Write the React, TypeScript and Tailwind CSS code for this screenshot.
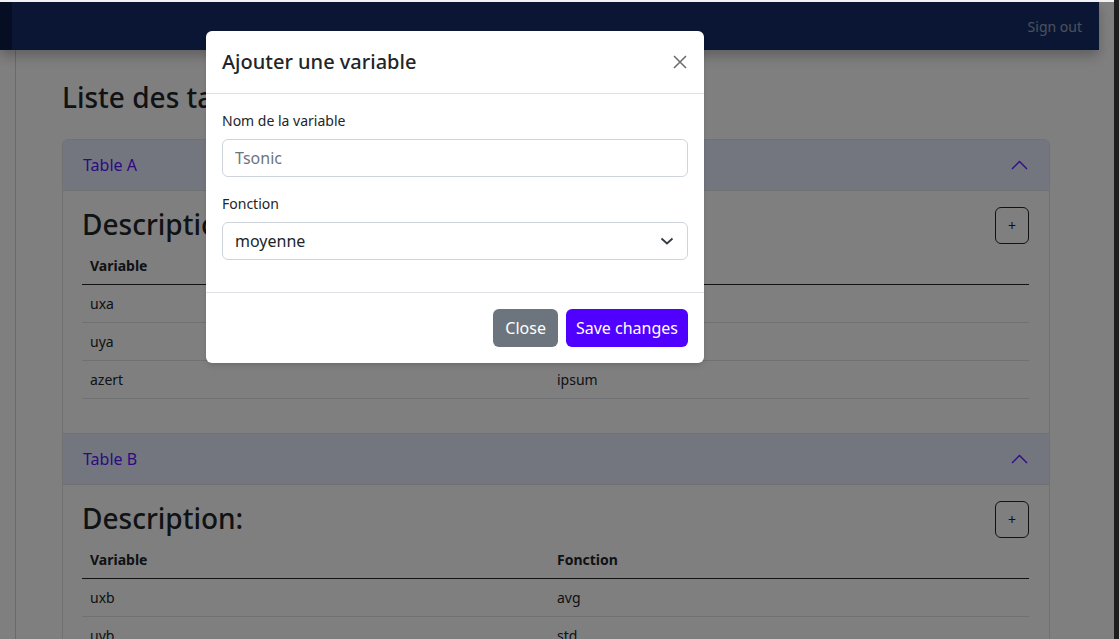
import React from "react";

type Row = { variable: string; fonction: string };

const tables: { name: string; rows: Row[] }[] = [
  {
    name: "Table A",
    rows: [
      { variable: "uxa", fonction: "avg" },
      { variable: "uya", fonction: "std" },
      { variable: "azert", fonction: "ipsum" },
    ],
  },
  {
    name: "Table B",
    rows: [
      { variable: "uxb", fonction: "avg" },
      { variable: "uyb", fonction: "std" },
      { variable: "uzb", fonction: "max" },
    ],
  },
];

function ChevronUp() {
  return (
    <svg width="17" height="10" viewBox="0 0 17 10" fill="none">
      <path d="M1 9 L8.5 1.5 L16 9" stroke="#5a1aff" strokeWidth="1.4" />
    </svg>
  );
}

function AccordionItem({ name, rows, first }: { name: string; rows: Row[]; first?: boolean }) {
  return (
    <div className={`border border-[#dee2e6] ${first ? "rounded-t-md" : "border-t-0"}`}>
      {/* Header */}
      <div className="h-[51px] flex items-center justify-between pl-5 pr-[21px] bg-[#e6ecff] border-b border-[#dee2e6]">
        <span className="text-[16px] text-[#5a14ff]">{name}</span>
        <ChevronUp />
      </div>

      {/* Body */}
      <div className="pl-[19px] pr-5 pt-4 pb-[18px]">
        <div className="flex justify-between items-start">
          <h3 className="text-[28px] font-medium leading-[34px] text-[#212529]">Description:</h3>
          <button className="w-[34px] h-[37px] border border-[#212529] rounded-md text-[14px] text-[#212529] flex items-center justify-center">
            +
          </button>
        </div>
        <table className="w-full mt-[3px] mb-4 text-[14px] text-[#212529]">
          <thead>
            <tr className="border-b border-[#212529]">
              <th className="w-[467px] text-left font-bold px-2 py-2 leading-[21px]">Variable</th>
              <th className="text-left font-bold px-2 py-2 leading-[21px]">Fonction</th>
            </tr>
          </thead>
          <tbody>
            {rows.map((r) => (
              <tr key={r.variable} className="border-b border-[#dee2e6]">
                <td className="px-2 py-2 leading-[21px]">{r.variable}</td>
                <td className="px-2 py-2 leading-[21px]">{r.fonction}</td>
              </tr>
            ))}
          </tbody>
        </table>
      </div>
    </div>
  );
}

function Modal() {
  return (
    <div className="absolute left-[206px] top-[29px] w-[498px] bg-white rounded-md shadow-md text-[#212529]">
      <div className="h-[63px] flex items-center justify-between px-4 border-b border-[#dee2e6]">
        <h5 className="text-[20px] font-medium leading-[30px]">Ajouter une variable</h5>
        <svg width="14" height="14" viewBox="0 0 14 14" className="mr-[1px]">
          <path d="M1 1 L13 13 M13 1 L1 13" stroke="#6e6e6e" strokeWidth="1.6" />
        </svg>
      </div>

      <div className="p-4">
        <label className="block text-[14px] leading-[21px] mb-2">Nom de la variable</label>
        <input
          className="w-full h-[38px] border border-[#ced4da] rounded-md px-3 text-[16px] placeholder:text-[#6c757d] outline-none"
          placeholder="Tsonic"
        />
        <label className="block text-[14px] leading-[21px] mt-4 mb-2">Fonction</label>
        <div className="h-[38px] border border-[#ced4da] rounded-md px-3 flex items-center justify-between mb-4">
          <span className="text-[16px]">moyenne</span>
          <svg width="14" height="8" viewBox="0 0 14 8" fill="none" className="mr-[1px]">
            <path d="M1.5 1.5 L7 6.5 L12.5 1.5" stroke="#343a40" strokeWidth="1.8" />
          </svg>
        </div>
      </div>

      <div className="border-t border-[#dee2e6] px-4 pt-4 pb-4 flex justify-end gap-2">
        <button className="h-[38px] px-3 rounded-md bg-[#6c757d] text-white text-[16px]">Close</button>
        <button className="h-[38px] px-[10px] rounded-md bg-[#5000ff] text-white text-[16px]">Save changes</button>
      </div>
    </div>
  );
}

export default function App() {
  return (
    <div className="h-[639px] w-[1119px] overflow-hidden flex font-['Noto_Sans',sans-serif]">
      <div className="w-[1114px] flex flex-col">
        <div className="h-[2px] shrink-0 bg-[#f2f2f2]" />
        <div className="relative flex-1 flex bg-white overflow-hidden">
          <div className="w-[1099px] flex flex-col">
            {/* Navbar */}
            <div className="h-[48px] shrink-0 flex bg-[#142c66] shadow-[0_6px_12px_rgba(0,0,0,0.25)] relative z-10">
              <div className="w-[12px] bg-[#0b1d46]" />
              <div className="flex-1 flex items-center justify-end pr-[17px]">
                <span className="text-[14px] text-white/55">Sign out</span>
              </div>
            </div>

            <div className="flex flex-1">
              <div className="w-[16px] shrink-0 border-r border-[#d4d4d4]" />
              <main className="flex-1 pl-[46px] pr-[49px] pt-[30px]">
                <h2 className="text-[28px] font-medium leading-[34px] text-[#212529] mb-[25px]">
                  Liste des tables
                </h2>
                {tables.map((t, i) => (
                  <AccordionItem key={t.name} name={t.name} rows={t.rows} first={i === 0} />
                ))}
              </main>
            </div>
          </div>
          <div className="flex-1" />

          {/* Backdrop + modal */}
          <div className="absolute inset-0 bg-black/50 z-20" />
          <div className="absolute inset-0 z-30">
            <Modal />
          </div>
        </div>
      </div>
      <div className="w-[5px] bg-[#1e1e1e]" />
    </div>
  );
}
